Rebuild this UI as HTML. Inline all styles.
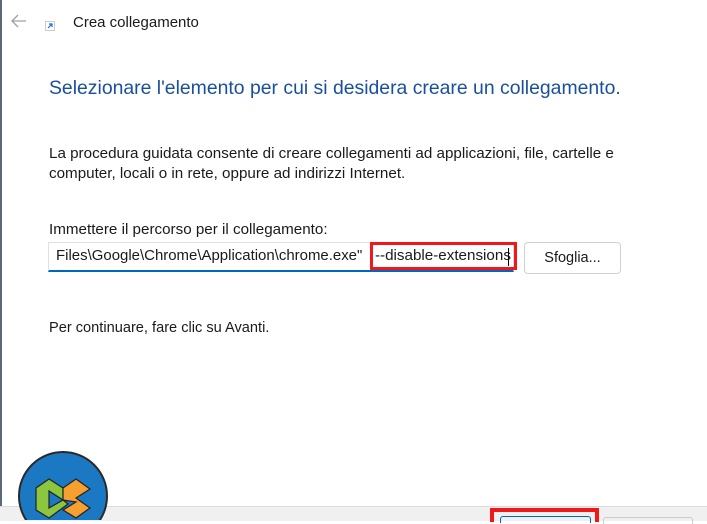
<!DOCTYPE html>
<html><head><meta charset="utf-8"><style>
html,body{margin:0;padding:0}
body{width:707px;height:520px;position:relative;overflow:hidden;background:#fff;font-family:"Liberation Sans",sans-serif;color:#1a1a1a}
.lb{position:absolute;left:0;top:0;width:2px;height:520px;background:#5a6a78}
.t{position:absolute;white-space:nowrap}
</style></head><body>
<div class="lb"></div>
<svg class="t" style="left:10px;top:13px" width="18" height="16" viewBox="0 0 18 16"><path d="M16 8H2M8 2L2 8l6 6" fill="none" stroke="#a0a0a0" stroke-width="1.3"/></svg>
<svg class="t" style="left:45px;top:21px" width="10" height="10" viewBox="0 0 10 10"><rect x="0.5" y="0.5" width="9" height="9" fill="#fff" stroke="#ccc"/><path d="M3 7L7 3M4 3h3v3" stroke="#1e6fd0" stroke-width="1.2" fill="none"/></svg>
<div class="t" style="left:73px;top:14px;font-size:15px">Crea collegamento</div>
<div class="t" style="left:49px;top:77px;font-size:19.4px;color:#1a4f9e">Selezionare l'elemento per cui si desidera creare un collegamento.</div>
<div class="t" style="left:49px;top:144px;font-size:15.2px;line-height:20px">La procedura guidata consente di creare collegamenti ad applicazioni, file, cartelle e<br>computer, locali o in rete, oppure ad indirizzi Internet.</div>
<div class="t" style="left:49px;top:221px;font-size:15.2px">Immettere il percorso per il collegamento:</div>
<div class="t" style="left:48px;top:242px;width:466px;height:30px;border:1px solid #e0e0e0;border-bottom:2px solid #0067c0;box-sizing:border-box"></div>
<div class="t" style="left:56px;top:247px;font-size:15.2px;transform:scaleX(0.985);transform-origin:left">Files\Google\Chrome\Application\chrome.exe"</div>
<div class="t" style="left:375px;top:247px;font-size:15.2px">--disable-extensions</div>
<div class="t" style="left:508px;top:248px;width:1px;height:18px;background:#000"></div>
<div class="t" style="left:370px;top:242px;width:147px;height:28px;border:3px solid #f01818;box-sizing:border-box"></div>
<div class="t" style="left:524px;top:242px;width:97px;height:32px;border:1px solid #d0d0d0;border-radius:4px;box-sizing:border-box;font-size:14.5px;text-align:center;line-height:31px">Sfoglia...</div>
<div class="t" style="left:49px;top:320px;font-size:14.6px">Per continuare, fare clic su Avanti.</div>
<div class="t" style="left:0;top:506px;width:707px;height:14px;background:#f0f0f0;border-top:1px solid #dcdcdc"></div>
<div class="t" style="left:490px;top:508px;width:109px;height:14px;border:4px solid #f01818;border-bottom:none;box-sizing:border-box"></div>
<div class="t" style="left:500px;top:516px;width:89px;height:6px;border:1px solid #0067c0;border-bottom:none;border-radius:3px 3px 0 0"></div>
<div class="t" style="left:603px;top:517px;width:88px;height:6px;border:1px solid #ccc;border-bottom:none;border-radius:3px 3px 0 0"></div>
<svg class="t" style="left:16px;top:450px" width="94" height="70" viewBox="0 0 94 70">
<circle cx="47" cy="46" r="44" fill="#1b78c2" stroke="#2a2a2a" stroke-width="2"/>
<path d="M20 38L33 29L47 38V50L33 41V58L47 50L52 54L33 68L20 60Z" fill="#8cc63f" stroke="#222" stroke-width="1.2"/>
<path d="M47 38L60 29L74 39L60 48L74 58L60 68L47 60L60 52L47 50Z" fill="#f7a030" stroke="#222" stroke-width="1.2"/>
</svg>
</body></html>
